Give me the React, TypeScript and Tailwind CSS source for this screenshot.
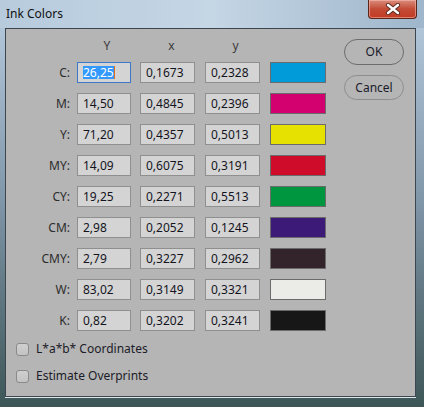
import React from "react";

const rows = [
  { l: "C:", Y: "26,25", x: "0,1673", y: "0,2328", c: "#009bd8" },
  { l: "M:", Y: "14,50", x: "0,4845", y: "0,2396", c: "#d3006f" },
  { l: "Y:", Y: "71,20", x: "0,4357", y: "0,5013", c: "#e6e100" },
  { l: "MY:", Y: "14,09", x: "0,6075", y: "0,3191", c: "#cf0d2b" },
  { l: "CY:", Y: "19,25", x: "0,2271", y: "0,5513", c: "#00963f" },
  { l: "CM:", Y: "2,98", x: "0,2052", y: "0,1245", c: "#3c1a78" },
  { l: "CMY:", Y: "2,79", x: "0,3227", y: "0,2962", c: "#33232a" },
  { l: "W:", Y: "83,02", x: "0,3149", y: "0,3321", c: "#ebebe8" },
  { l: "K:", Y: "0,82", x: "0,3202", y: "0,3241", c: "#171717" },
];

function Field({ v, w, focused }: { v: string; w: string; focused?: boolean }) {
  return (
    <div
      className={`${w} h-[21px] flex items-center pl-[5px] text-[12px] leading-none text-[#14141e] bg-[#d4d4d4] border ${
        focused ? "border-[#3f78c9]" : "border-[#8f8f8f]"
      }`}
    >
      {focused ? (
        <>
          <span className="bg-[#3399ff] text-white h-[13px] flex items-center">{v}</span>
          <span className="w-[1px] h-[13px] bg-[#e0701e]" />
        </>
      ) : (
        v
      )}
    </div>
  );
}

function Check({ label }: { label: string }) {
  return (
    <div className="flex items-center h-[16px] gap-[7px]">
      <div className="w-[13px] h-[13px] rounded-[3px] border border-[#8a8a8a] bg-gradient-to-b from-[#cfcfcf] to-[#c3c3c3]" />
      <span className="text-[12px] text-[#1c1c28]">{label}</span>
    </div>
  );
}

export default function App() {
  return (
    <div
      className="w-[424px] h-[407px] overflow-hidden flex flex-col font-['Noto_Sans',sans-serif] bg-gradient-to-b from-[#b9cde0] via-[#7f95a8] to-[#3d5657]"
    >
      <div className="h-[28px] flex items-start shrink-0 bg-gradient-to-r from-[#b7cbdd] via-[#c5d6e5] to-[#9fb6cb]">
        <span className="ml-[6px] mt-[5px] text-[12px] text-[#111]">Ink Colors</span>
        <div className="ml-auto mr-[7px] w-[49px] h-[19px] rounded-b-[4px] border border-t-0 border-[#5a2418] bg-gradient-to-b from-[#d98b7c] via-[#c34b35] to-[#c23a22] flex items-center justify-center shadow-[inset_0_0_0_1px_rgba(255,200,190,0.5)]">
          <svg width="16" height="12" viewBox="0 0 16 12">
            <path d="M3 2 L13 10 M13 2 L3 10" stroke="#5a2a22" strokeWidth="4.2" strokeLinecap="round" />
            <path d="M3 2 L13 10 M13 2 L3 10" stroke="#ffffff" strokeWidth="2.4" strokeLinecap="round" />
          </svg>
        </div>
      </div>
      <div className="ml-[5px] w-[411px] h-[369px] border border-[#3b4650] bg-[#b5b5b5] pl-[10px] pt-[9px] shadow-[0_1px_0_#dfe6ec]">
        <div className="flex items-start">
          <div className="flex flex-col">
            <div className="flex h-[16px] items-center text-[12px] text-[#3a3a3a] leading-none">
              <div className="w-[54px]" />
              <div className="ml-[7px] w-[54px] text-center pl-[6px]">Y</div>
              <div className="ml-[9px] w-[55px] text-center pl-[8px]">x</div>
              <div className="ml-[10px] w-[55px] text-center pl-[6px]">y</div>
            </div>
            <div className="flex flex-col gap-[10px] mt-[8px]">
              {rows.map((r, i) => (
                <div key={r.l} className="flex items-center h-[21px]">
                  <div className="w-[54px] text-right text-[12px] text-[#2c2c2c]">{r.l}</div>
                  <div className="ml-[7px]">
                    <Field v={r.Y} w="w-[54px]" focused={i === 0} />
                  </div>
                  <div className="ml-[9px]">
                    <Field v={r.x} w="w-[55px]" />
                  </div>
                  <div className="ml-[10px]">
                    <Field v={r.y} w="w-[55px]" />
                  </div>
                  <div className="ml-[10px] w-[56px] h-[21px] border border-[#6b6b6b]" style={{ backgroundColor: r.c }} />
                </div>
              ))}
            </div>
          </div>
          <div className="ml-[18px] mt-[1px] flex flex-col gap-[10px]">
            <button className="w-[60px] h-[26px] rounded-[13px] border border-[#6c6c6c] text-[12px] text-[#1a1a2a] flex items-center justify-center">
              OK
            </button>
            <button className="w-[60px] h-[25px] rounded-[13px] border border-[#8e8e8e] text-[12px] text-[#1a1a2a] flex items-center justify-center">
              Cancel
            </button>
          </div>
        </div>
        <div className="flex flex-col gap-[11px] mt-[10px]">
          <Check label="L*a*b* Coordinates" />
          <Check label="Estimate Overprints" />
        </div>
      </div>
    </div>
  );
}
